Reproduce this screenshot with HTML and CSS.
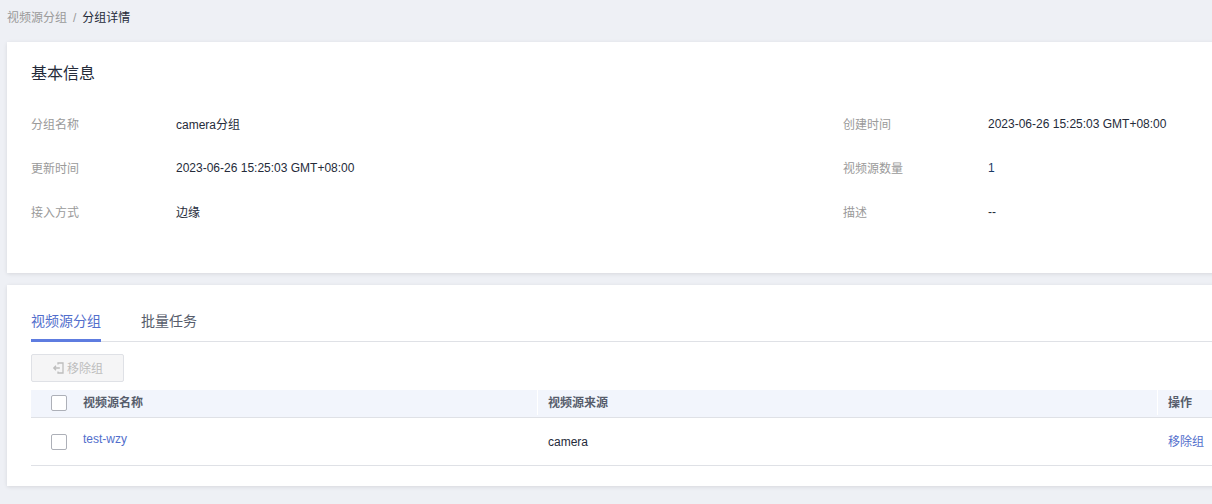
FILE: index.html
```html
<!DOCTYPE html>
<html lang="zh-CN">
<head>
<meta charset="utf-8">
<title>分组详情</title>
<link rel="stylesheet" href="styles.css">
</head>
<body>
<nav class="crumbs"><span class="crumb-link">视频源分组</span><span class="crumb-sep">/</span><span class="crumb-current">分组详情</span></nav>
<section class="card info">
  <h2 class="card-title">基本信息</h2>
  <dl class="info-grid">
    <div class="info-item"><dt>分组名称</dt><dd class="cjk">camera分组</dd></div>
    <div class="info-item"><dt>创建时间</dt><dd>2023-06-26 15:25:03 GMT+08:00</dd></div>
    <div class="info-item"><dt>更新时间</dt><dd>2023-06-26 15:25:03 GMT+08:00</dd></div>
    <div class="info-item"><dt>视频源数量</dt><dd class="num">1</dd></div>
    <div class="info-item"><dt>接入方式</dt><dd class="cjk">边缘</dd></div>
    <div class="info-item"><dt>描述</dt><dd>--</dd></div>
  </dl>
</section>
<section class="card list">
  <div class="tabs"><span class="tab active">视频源分组</span><span class="tab">批量任务</span></div>
  <div class="toolbar">
    <button class="btn" disabled>
      <svg class="btn-icon" width="12" height="12" viewBox="0 0 12 12" fill="none" stroke="currentColor" stroke-width="1.3"><path d="M6 2.5V1h5v10H6V9.5"/><path d="M1.8 6h6M4 3.8 1.8 6 4 8.2"/></svg>
      <span class="btn-label">移除组</span>
    </button>
  </div>
  <div class="table">
    <div class="row head">
      <div class="cell c-check"><span class="checkbox"></span></div>
      <div class="cell c-name">视频源名称</div>
      <div class="cell c-source">视频源来源</div>
      <div class="cell c-op">操作</div>
    </div>
    <div class="row body">
      <div class="cell c-check"><span class="checkbox"></span></div>
      <div class="cell c-name"><a class="link raised">test-wzy</a></div>
      <div class="cell c-source">camera</div>
      <div class="cell c-op"><a class="link">移除组</a></div>
    </div>
  </div>
</section>
</body>
</html>
```
FILE: styles.css
```css
* { box-sizing: border-box; }
html, body { height: 100%; overflow: hidden; }
body {
  margin: 0;
  width: 1212px;
  padding-left: 7px;
  background: #eef0f5;
  color: #252b3a;
  font: 12px/18px "Liberation Sans", "Noto Sans CJK SC", sans-serif;
}
.crumbs { display: flex; align-items: center; height: 34px; padding-top: 2px; gap: 6px; }
.crumb-link, .crumb-sep { color: #9a9a9a; }
.card {
  width: 1240px;
  background: #fff;
  box-shadow: 0 1px 4px rgba(0, 0, 0, .1);
}
.info { height: 231px; margin-top: 8px; padding: 22px 24px 0; }
.card-title { margin: 0; font-size: 16px; line-height: 20px; font-weight: 400; color: #252b3a; }
.info-grid {
  display: grid;
  grid-template-columns: 812px 1fr;
  grid-auto-rows: 44px;
  margin: 19px 0 0;
}
.info-item { display: flex; align-items: center; height: 44px; }
.info-item dt { width: 145px; color: #9a9a9a; }
.info-item dd { margin: 0; color: #252b3a; position: relative; top: -1px; }
.info-item .cjk { top: 0; }
.info-item .num { color: #1a3a66; }
.list { height: 201px; margin-top: 12px; padding: 21px 24px 0; }
.tabs { display: flex; gap: 40px; height: 36px; border-bottom: 1px solid #dfe1e6; }
.tab { height: 36px; font-size: 14px; line-height: 30px; color: #575d6c; }
.tab.active { color: #526ecc; border-bottom: 3px solid #5e7ce0; }
.toolbar { margin-top: 12px; height: 28px; }
.btn {
  display: flex;
  align-items: center;
  justify-content: center;
  gap: 3px;
  width: 93px;
  height: 28px;
  padding: 0;
  border: 1px solid #dfe1e6;
  border-radius: 2px;
  background: #f5f5f6;
  color: #bdbdbd;
  font: inherit;
}
.btn-icon { flex: none; }
.btn-label { position: relative; top: 1px; }
.table { margin-top: 8px; width: 1212px; }
.row { display: flex; }
.row.head {
  height: 28px;
  padding-bottom: 2px;
  background: #f2f5fc;
  border-bottom: 1px solid #dfe1e6;
  font-weight: 700;
  color: #575d6c;
}
.row.body { height: 48px; border-bottom: 1px solid #dfe1e6; }
.cell { display: flex; align-items: center; }
.c-check { width: 52px; padding-left: 20px; flex: none; }
.c-name { width: 454px; flex: none; }
.c-source { width: 620px; flex: none; padding-left: 11px; }
.c-op { flex: 1; padding-left: 11px; }
.head .c-source, .head .c-op { border-left: 1px solid #fff; padding-left: 10px; }
.checkbox {
  display: block;
  width: 16px;
  height: 16px;
  border: 1px solid #adb0b8;
  border-radius: 2px;
  background: #fff;
}
.link { color: #526ecc; }
.raised { position: relative; top: -3px; }
```
